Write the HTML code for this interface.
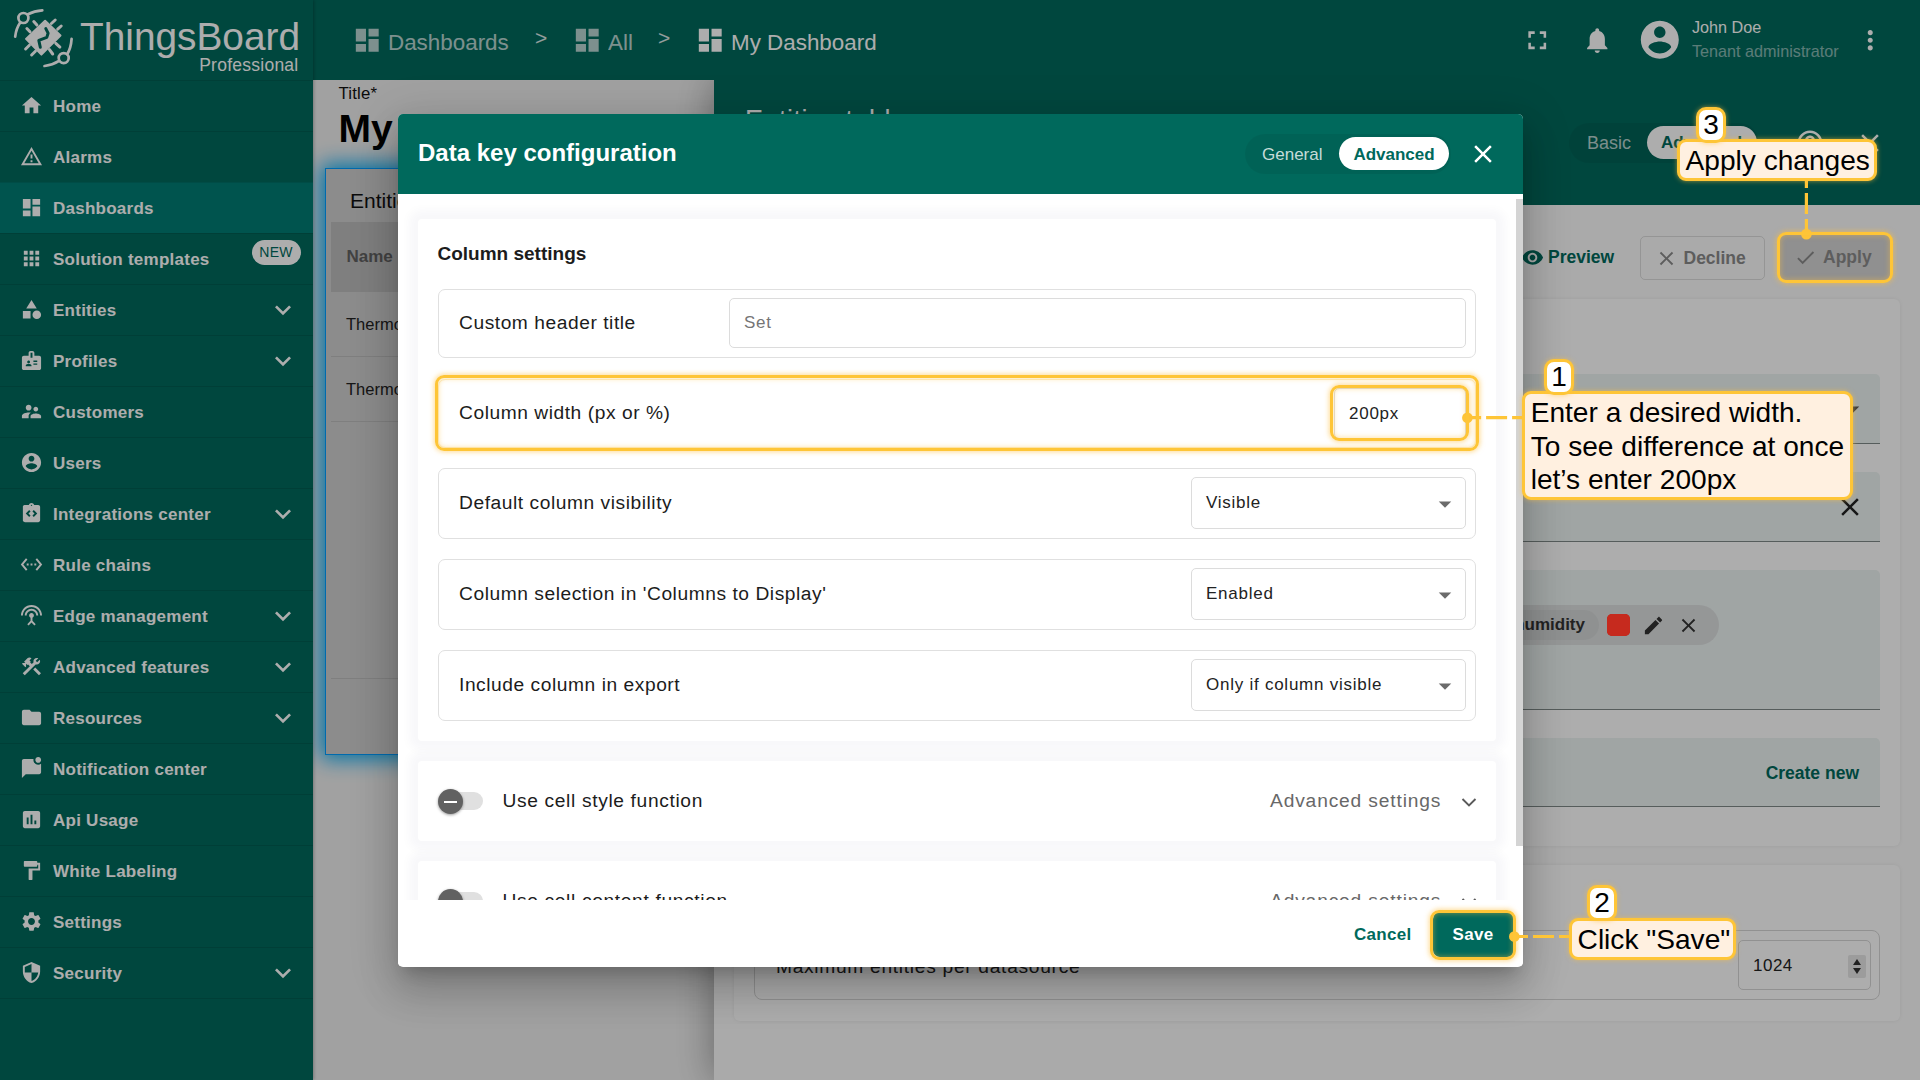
<!DOCTYPE html>
<html lang="en">
<head>
<meta charset="utf-8">
<title>ThingsBoard - Data key configuration</title>
<style>
*{box-sizing:border-box;margin:0;padding:0}
html,body{width:1920px;height:1080px;overflow:hidden;background:#eee;font-family:"Liberation Sans",sans-serif;color:#212121}
svg{display:block}
#app{position:absolute;left:0;top:0;width:1920px;height:1080px;overflow:hidden}
/* ---------- sidebar ---------- */
#side{position:absolute;left:0;top:0;width:313px;height:1080px;background:#00695c;color:#fff;z-index:5;box-shadow:1px 0 3px rgba(0,0,0,.25)}
#logo{position:absolute;left:0;top:0;width:313px;height:80px}
#logo svg{position:absolute;left:0;top:0;width:80px;height:80px}
#logo .tb{position:absolute;left:80px;top:15px;font-size:38.800px;line-height:44px;white-space:nowrap}
#logo .pro{position:absolute;right:14.500px;top:55px;font-size:17.5px;line-height:20px;letter-spacing:.25px;white-space:nowrap}
.mi{position:absolute;left:0;width:313px;height:51px;border-top:1px solid rgba(0,0,0,.10);font-weight:700;font-size:17px;letter-spacing:.25px;line-height:52px;padding-left:53px;white-space:nowrap}
.mi svg.ic{position:absolute;left:20px;top:13px;width:23px;height:23px;fill:#fff}
.mi svg.ch{position:absolute;left:267px;top:9px;width:32px;height:32px;fill:#fff}
.mi.act{background:#007d73}
.new{position:absolute;left:251.500px;top:6px;width:49px;height:24.500px;border-radius:13px;background:#fff;color:#00695c;font-size:14px;line-height:25px;font-weight:400;text-align:center;letter-spacing:.3px}
/* ---------- toolbar ---------- */
#bar{position:absolute;left:313px;top:0;width:1607px;height:80px;background:#00695c;color:#fff;z-index:2}
#bar svg{position:absolute;fill:#fff}
#bar .bc{position:absolute;top:28.500px;font-size:22.400px;line-height:28px;white-space:nowrap}
#bar .gt{position:absolute;top:24.400px;font-size:21px;line-height:28px;opacity:.85}
#bar .un{position:absolute;left:1379px;font-size:16.2px;line-height:20px;white-space:nowrap}
#backdrop{position:absolute;left:0;top:0;width:1920px;height:1080px;background:rgba(0,0,0,.32);z-index:10}
/* ---------- dashboard ---------- */
#dash{position:absolute;left:313px;top:80px;width:420px;height:1000px;background:#eee;overflow:hidden}
#dash .tl{position:absolute;left:25.500px;top:4px;font-size:16.800px;line-height:20px;color:#111;letter-spacing:.2px}
#dash .tt{position:absolute;left:25.500px;top:24.500px;font-size:39px;font-weight:700;line-height:48px;color:#000;white-space:nowrap}
#wdg{position:absolute;left:12px;top:88px;width:430px;height:587px;background:#cecece;border:1px solid #009cff;box-shadow:0 0 20px 4px rgb(0,170,245)}
#wdg .wt{position:absolute;left:24px;top:19px;font-size:21px;line-height:26px;color:#111;white-space:nowrap}
#wdg .wh{position:absolute;left:5px;top:53px;width:430px;height:70px;background:#bcbcbc}
#wdg .wh span{position:absolute;left:15.500px;top:24.500px;font-size:17px;line-height:20px;font-weight:700;color:#626262}
#wdg .wr{position:absolute;left:5px;width:430px;height:65px;border-bottom:1px solid #bbb;padding-left:15px;font-size:16.500px;line-height:64px;color:#222;white-space:nowrap}
#wdg .wl{position:absolute;left:5px;width:430px;height:1px;background:#bbb}
/* ---------- right panel ---------- */
#pan{position:absolute;left:714px;top:80px;width:1206px;height:1000px;background:#fbfbfb;z-index:1;box-shadow:0 0 36px 0 rgba(0,0,0,.38)}
#pan svg{position:absolute}
#pan .ph{position:absolute;left:0;top:0;width:1206px;height:125px;background:#00695c;color:#fff}
#pan .pt{position:absolute;left:31px;top:25px;font-size:27px;line-height:30px;white-space:nowrap;letter-spacing:.5px}
#pan .tg{position:absolute;left:855px;top:43px;width:190px;height:40px;border-radius:20px;background:rgba(0,0,0,.06)}
#pan .tg .b{position:absolute;left:18px;top:10px;font-size:18px;line-height:20px;color:rgba(255,255,255,.72)}
#pan .tg .a{position:absolute;left:77.500px;top:3px;width:110px;height:33px;border-radius:17px;background:#fff;color:#00695c;font-weight:700;font-size:17px;line-height:33px;text-align:center}
#pan .pv span{position:absolute;left:834px;top:166px;font-size:17.500px;font-weight:700;line-height:22px;color:#00695c}
#pan .bd{position:absolute;left:925.500px;top:155.500px;width:125px;height:44px;border:1px solid rgba(0,0,0,.12);border-radius:5px;color:#8a8a8a;font-size:17.500px;font-weight:700;line-height:42px;padding-left:43px}
#pan .ba{position:absolute;left:1066px;top:155px;width:110px;height:45px;border-radius:5px;background:#d5d5d5;color:#8a8a8a;font-size:17.500px;font-weight:700;line-height:45px;padding-left:43px}
#pan .card{position:absolute;left:20px;width:1166px;background:#fff;border-radius:6px;box-shadow:0 0 4px rgba(0,0,0,.07)}
#pan .fld{position:absolute;left:20px;width:1126px;background:#ecf3f2;border-bottom:1px solid #7f8a88;border-radius:5px 5px 0 0}
#pan .chip{position:absolute;left:680px;top:35px;width:285px;height:40px;border-radius:20px;background:#dcdfdf}
#pan .chip .cl{position:absolute;left:0;top:5px;width:165px;height:30px;border-radius:15px;background:#d3d6d6;font-size:17px;font-weight:700;line-height:30px;color:#333;text-align:right;padding-right:14px}
#pan .chip .sq{position:absolute;left:173px;top:9px;width:23px;height:22px;border-radius:5px;background:#ff3a2c}
#pan .cn{position:absolute;right:21px;top:24px;font-size:17.500px;font-weight:700;line-height:22px;color:#00695c}
#pan .orow{position:absolute;left:20px;top:65px;width:1126px;height:69.500px;border:1px solid #d6d6d6;border-radius:8px}
#pan .ol{position:absolute;left:21px;top:23.500px;font-size:19.200px;line-height:24px;color:#222;white-space:nowrap;letter-spacing:.7px}
#pan .num{position:absolute;left:983px;top:9px;width:133px;height:50px;border:1px solid #d6d6d6;border-radius:5px}
#pan .num span{position:absolute;left:14px;top:14px;font-size:17px;line-height:22px;color:#222;letter-spacing:.5px}
#pan .num i{position:absolute;left:109px;top:14px;width:18px;height:23px;background:#e6e6e6;border-radius:2px}
#pan .num b{position:absolute;left:5px;width:0;height:0;border-left:4px solid transparent;border-right:4px solid transparent}
#pan .num b.u{top:4px;border-bottom:6px solid #333}
#pan .num b.d{top:13px;border-top:6px solid #333}
/* ---------- dialog ---------- */
#dlg{position:absolute;left:398px;top:114px;width:1125px;height:852.700px;background:#fff;border-radius:5px;z-index:20;overflow:hidden;box-shadow:0 11px 15px -7px rgba(0,0,0,.2),0 24px 38px 3px rgba(0,0,0,.14),0 9px 46px 8px rgba(0,0,0,.12)}
#dlg .dh{position:absolute;left:0;top:0;width:1125px;height:80px;background:#00695c;color:#fff}
#dlg .dt{position:absolute;left:20px;top:24px;font-size:24px;font-weight:700;line-height:30px;white-space:nowrap}
#dlg .tg{position:absolute;left:847px;top:20px;width:206px;height:40px;border-radius:20px;background:rgba(0,0,0,.06)}
#dlg .tg .b{position:absolute;left:17px;top:11px;font-size:17px;line-height:20px;color:rgba(255,255,255,.78)}
#dlg .tg .a{position:absolute;left:94px;top:3px;width:110px;height:33px;border-radius:17px;background:#fff;color:#00695c;font-weight:700;font-size:17px;line-height:35px;text-align:center}
#dlg .dx{position:absolute;left:1069.500px;top:25px;width:30px;height:30px;fill:#fff}
#dlg .dc{position:absolute;left:0;top:80px;width:1125px;height:706px;background:#fff;overflow:hidden}
#dlg .c1{position:absolute;left:20px;top:25px;width:1078px;height:522px;background:#fff;border-radius:4px;box-shadow:0 0 10px 9px rgba(20,40,90,.03)}
#dlg .ct{position:absolute;left:19.500px;top:23px;font-size:19px;font-weight:700;line-height:24px;color:#1c1c1c;white-space:nowrap}
#dlg .row{position:absolute;left:20px;width:1038px;border:1px solid #e0e0e0;border-radius:7px}
#dlg .rl{position:absolute;left:20px;top:50%;margin-top:-12px;font-size:19.200px;line-height:24px;color:#1c1c1c;white-space:nowrap;letter-spacing:.55px}
#dlg .inp{position:absolute;border:1px solid #dcdcdc;border-radius:5px}
#dlg .inp span{position:absolute;left:14px;top:50%;margin-top:-11px;font-size:17px;line-height:22px;color:#222;letter-spacing:.75px;white-space:nowrap}
#dlg .inp svg{position:absolute;right:5px;top:11px;width:30px;height:30px;fill:#6b6b6b}
#dlg .c2{position:absolute;left:20px;width:1078px;height:80px;background:#fff;border-radius:4px;box-shadow:0 0 10px 9px rgba(20,40,90,.03)}
#dlg .sw{position:absolute;left:20px;top:28px;width:46px;height:24px}
#dlg .sw i{position:absolute;left:1px;top:3px;width:44px;height:18px;border-radius:9px;background:#e0e0e0}
#dlg .sw b{position:absolute;left:0;top:0;width:25px;height:25px;border-radius:50%;background:#616161;box-shadow:0 1px 3px rgba(0,0,0,.4)}
#dlg .sw b:after{content:"";position:absolute;left:6px;top:11.500px;width:13px;height:2px;background:#fff}
#dlg .sl{position:absolute;left:84.500px;top:28px;font-size:19.200px;line-height:24px;color:#1c1c1c;white-space:nowrap;letter-spacing:.65px}
#dlg .as{position:absolute;left:852px;top:28px;font-size:19.200px;line-height:24px;color:#686868;white-space:nowrap;letter-spacing:.85px}
#dlg .c2 svg{position:absolute;left:1041.500px;top:35px;width:18px;height:14px;fill:none;stroke:#5a5a5a;stroke-width:1.900}
#dlg .sb{position:absolute;left:1117.500px;top:0;width:7.500px;height:706px;background:#fff}
#dlg .sb i{position:absolute;left:0;top:5px;width:7.500px;height:647px;background:#d4d4d4}
#dlg .df{position:absolute;left:0;top:786px;width:1125px;height:66px;background:#fff}
#dlg .cancel{position:absolute;left:956px;top:23.500px;font-size:17px;font-weight:700;line-height:22px;color:#00695c;letter-spacing:.3px}
#dlg .save{position:absolute;left:1034.500px;top:12px;width:81px;height:45px;border-radius:7px;background:#00695c;color:#fff;font-size:17px;font-weight:700;line-height:45.500px;text-align:center;letter-spacing:.3px}
/* ---------- annotations ---------- */
#ann{position:absolute;left:0;top:0;width:1920px;height:1080px;z-index:30;font-family:"Liberation Sans",sans-serif;color:#000}
#ann .ln{position:absolute;left:0;top:0}
#ann .hl{position:absolute;border:3.500px solid #fec537;border-radius:9px;box-shadow:0 0 5px 1px rgba(253,190,60,.55),inset 0 0 5px 1px rgba(253,190,60,.4)}
#ann .lb{position:absolute;border:3px solid #fec537;border-radius:9px;background:#fff0e0;box-shadow:0 0 5px rgba(253,190,60,.6);font-size:28.100px;line-height:33.500px;padding:2.300px 0 0 5.500px;white-space:nowrap}
#ann .nb{position:absolute;width:30px;height:35.800px;border:3px solid #fec537;border-radius:10px;background:#fff;box-shadow:0 0 5px rgba(253,190,60,.6);font-size:28px;line-height:30.500px;text-align:center}

</style>
</head>
<body>
<div id="app">
<div id="bar">
<svg style="left:39px;top:25px;width:30.5px;height:30.5px;opacity:.72" viewBox="0 0 24 24"><path d="M3 13h8V3H3v10zm0 8h8v-6H3v6zm10 0h8V11h-8v10zm0-18v6h8V3h-8z"/></svg><div class="bc" style="left:75px;opacity:.72">Dashboards</div><div class="gt" style="left:222px">&gt;</div>
<svg style="left:258.5px;top:25px;width:30.5px;height:30.5px;opacity:.72" viewBox="0 0 24 24"><path d="M3 13h8V3H3v10zm0 8h8v-6H3v6zm10 0h8V11h-8v10zm0-18v6h8V3h-8z"/></svg><div class="bc" style="left:295px;opacity:.72">All</div><div class="gt" style="left:345px">&gt;</div>
<svg style="left:382px;top:25px;width:30.5px;height:30.5px" viewBox="0 0 24 24"><path d="M3 13h8V3H3v10zm0 8h8v-6H3v6zm10 0h8V11h-8v10zm0-18v6h8V3h-8z"/></svg><div class="bc" style="left:418px">My Dashboard</div>
<svg style="left:1209px;top:24.7px;width:30.5px;height:30.5px" viewBox="0 0 24 24"><path d="M7 14H5v5h5v-2H7v-3zm-2-4h2V7h3V5H5v5zm12 7h-3v2h5v-5h-2v3zM14 5v2h3v3h2V5h-5z"/></svg><svg style="left:1269px;top:25px;width:30.5px;height:30.5px" viewBox="0 0 24 24"><path d="M12 22c1.100 0 2-.9 2-2h-4c0 1.100.89 2 2 2zm6-6v-5c0-3.070-1.640-5.640-4.500-6.320V4c0-.83-.67-1.500-1.500-1.500s-1.500.67-1.500 1.500v.68C7.630 5.360 6 7.920 6 11v5l-2 2v1h16v-1l-2-2z"/></svg><svg style="left:1324px;top:17.4px;width:45.6px;height:45.6px" viewBox="0 0 24 24"><path d="M12 2C6.48 2 2 6.48 2 12s4.48 10 10 10 10-4.48 10-10S17.52 2 12 2zm0 3c1.660 0 3 1.340 3 3s-1.340 3-3 3-3-1.340-3-3 1.340-3 3-3zm0 14.200c-2.500 0-4.710-1.280-6-3.220.03-1.990 4-3.080 6-3.080 1.990 0 5.970 1.090 6 3.080-1.290 1.940-3.500 3.220-6 3.220z"/></svg><div class="un" style="top:17px">John Doe</div><div class="un" style="top:41.300px;opacity:.52">Tenant administrator</div>
<svg style="left:1541.5px;top:25px;width:30.5px;height:30.5px" viewBox="0 0 24 24"><path d="M12 8c1.100 0 2-.9 2-2s-.9-2-2-2-2 .9-2 2 .9 2 2 2zm0 2c-1.100 0-2 .9-2 2s.9 2 2 2 2-.9 2-2-.9-2-2-2zm0 6c-1.100 0-2 .9-2 2s.9 2 2 2 2-.9 2-2-.9-2-2-2z"/></svg></div>
<div id="side">
<div id="logo"><svg viewBox="0 0 80 80" fill="none" stroke="#fff" stroke-width="2.700" stroke-linecap="round" stroke-linejoin="round"><circle cx="23.400" cy="18" r="5"/><path d="M28 14.200C32.500 11.800 37 10.700 42.300 10.300M20.400 22.300C17.500 26.500 15.800 31 15.200 36.700"/><circle cx="63.700" cy="58.100" r="5"/><path d="M67.200 54.200C69.800 50 71.200 45 71.600 38.900M59 60.800C54.800 63.500 50 65.200 44.500 66"/><path stroke-width="3" d="M36.900 25.100L33.800 21.600M30 31.700L26.900 28.500M51.400 23.500L55.200 20M57.700 29.200L61.200 26M55.800 43.300L59.900 47.100M49.500 49.600L52.700 54M29.400 45.200L25.600 49M35.400 51.200L31.600 55"/><path d="M45.100 20.700L60.500 35.500 41.400 54.600 26 38.900z" fill="#fff" stroke-width="2"/><path d="M45.800 28.600l2.300 4.600-1.300 4.200-8 3 1.500 6.800" stroke="#00695c" stroke-width="3"/></svg>
<div class="tb">ThingsBoard</div><div class="pro">Professional</div></div>
<div class="mi" style="top:80px"><svg class="ic" viewBox="0 0 24 24"><path d="M10 20v-6h4v6h5v-8h3L12 3 2 12h3v8z"/></svg>Home</div>
<div class="mi" style="top:131px"><svg class="ic" viewBox="0 0 24 24"><path d="M12 5.99L19.53 19H4.47L12 5.99M12 2L1 21h22L12 2zm1 14h-2v2h2v-2zm0-6h-2v4h2v-4z"/></svg>Alarms</div>
<div class="mi act" style="top:182px"><svg class="ic" viewBox="0 0 24 24"><path d="M3 13h8V3H3v10zm0 8h8v-6H3v6zm10 0h8V11h-8v10zm0-18v6h8V3h-8z"/></svg>Dashboards</div>
<div class="mi" style="top:233px"><svg class="ic" viewBox="0 0 24 24"><path d="M4 8h4V4H4v4zm6 12h4v-4h-4v4zm-6 0h4v-4H4v4zm0-6h4v-4H4v4zm6 0h4v-4h-4v4zm6-10v4h4V4h-4zm-6 4h4V4h-4v4zm6 6h4v-4h-4v4zm0 6h4v-4h-4v4z"/></svg>Solution templates<span class="new">NEW</span></div>
<div class="mi" style="top:284px"><svg class="ic" viewBox="0 0 24 24"><path d="M12 2l-5.5 9h11zM17.5 13a4.5 4.5 0 1 0 0 9 4.5 4.5 0 0 0 0-9zM3 21.5h8v-8H3v8z"/></svg>Entities<svg class="ch" viewBox="0 0 24 24"><path d="M16.59 8.59L12 13.170 7.410 8.590 6 10l6 6 6-6z"/></svg></div>
<div class="mi" style="top:335px"><svg class="ic" viewBox="0 0 24 24"><path d="M20 7h-5V4c0-1.1-.9-2-2-2h-2c-1.1 0-2 .9-2 2v3H4c-1.1 0-2 .9-2 2v11c0 1.1.9 2 2 2h16c1.1 0 2-.9 2-2V9c0-1.1-.9-2-2-2zM9 12c.83 0 1.5.67 1.5 1.5S9.83 15 9 15s-1.5-.67-1.5-1.5S8.17 12 9 12zm3 6H6v-.75c0-1 2-1.5 3-1.5s3 .5 3 1.500V18zm1-9h-2V4h2v5zm5 7.5h-4V15h4v1.5zm0-3h-4V12h4v1.5z"/></svg>Profiles<svg class="ch" viewBox="0 0 24 24"><path d="M16.59 8.59L12 13.170 7.410 8.590 6 10l6 6 6-6z"/></svg></div>
<div class="mi" style="top:386px"><svg class="ic" viewBox="0 0 24 24"><path d="M16.5 12c1.38 0 2.49-1.12 2.49-2.5S17.88 7 16.5 7C15.12 7 14 8.12 14 9.5s1.12 2.5 2.5 2.5zM9 11c1.66 0 2.99-1.34 2.99-3S10.660 5 9 5C7.34 5 6 6.34 6 8s1.34 3 3 3zm7.5 3c-1.83 0-5.5.92-5.5 2.750V19h11v-2.250c0-1.830-3.670-2.750-5.500-2.750zM9 13c-2.330 0-7 1.170-7 3.500V19h7v-2.250c0-.85.33-2.340 2.370-3.470C10.500 13.100 9.660 13 9 13z"/></svg>Customers</div>
<div class="mi" style="top:437px"><svg class="ic" viewBox="0 0 24 24"><path d="M12 2C6.48 2 2 6.48 2 12s4.48 10 10 10 10-4.48 10-10S17.52 2 12 2zm0 3c1.660 0 3 1.340 3 3s-1.340 3-3 3-3-1.340-3-3 1.340-3 3-3zm0 14.200c-2.500 0-4.710-1.280-6-3.220.03-1.990 4-3.080 6-3.080 1.990 0 5.970 1.090 6 3.080-1.290 1.940-3.500 3.220-6 3.220z"/></svg>Users</div>
<div class="mi" style="top:488px"><svg class="ic" viewBox="0 0 24 24"><path d="M19 3h-4.180C14.4 1.840 13.300 1 12 1c-1.300 0-2.400.84-2.820 2H5c-.14 0-.27.01-.4.04-.39.08-.74.28-1.010.55-.18.18-.33.4-.43.64-.1.230-.16.490-.16.770v14c0 .27.06.54.16.78s.25.450.43.640c.27.270.62.470 1.010.550.13.02.26.030.4.030h14c1.100 0 2-.9 2-2V5c0-1.100-.9-2-2-2zM11 14.170l-1.410 1.420L6 12l3.590-3.590L11 9.830 8.830 12 11 14.170zm1-9.920c-.41 0-.75-.34-.75-.75s.34-.75.750-.75.750.34.750.750-.34.750-.750.750zm2.410 11.340L13 14.170 15.170 12 13 9.830l1.410-1.420L18 12l-3.590 3.590z"/></svg>Integrations center<svg class="ch" viewBox="0 0 24 24"><path d="M16.59 8.59L12 13.170 7.410 8.590 6 10l6 6 6-6z"/></svg></div>
<div class="mi" style="top:539px"><svg class="ic" viewBox="0 0 24 24"><path d="M7.77 6.76L6.23 5.48.82 12l5.410 6.520 1.540-1.280L3.420 12l4.350-5.240zM7 13h2v-2H7v2zm10-2h-2v2h2v-2zm-6 2h2v-2h-2v2zm6.770-7.520l-1.540 1.280L20.580 12l-4.350 5.240 1.540 1.280L23.180 12l-5.410-6.520z"/></svg>Rule chains</div>
<div class="mi" style="top:590px"><svg class="ic" viewBox="0 0 24 24"><path d="M12 5c-3.870 0-7 3.130-7 7h2c0-2.760 2.240-5 5-5s5 2.240 5 5h2c0-3.870-3.130-7-7-7zm1 9.290c.88-.39 1.500-1.260 1.500-2.290 0-1.380-1.120-2.500-2.500-2.500S9.500 10.620 9.500 12c0 1.020.62 1.900 1.500 2.290v3.300L7.590 21 9 22.410l3-3 3 3L16.410 21 13 17.590v-3.300zM12 1C5.930 1 1 5.930 1 12h2c0-4.970 4.030-9 9-9s9 4.030 9 9h2c0-6.070-4.930-11-11-11z"/></svg>Edge management<svg class="ch" viewBox="0 0 24 24"><path d="M16.59 8.59L12 13.170 7.410 8.590 6 10l6 6 6-6z"/></svg></div>
<div class="mi" style="top:641px"><svg class="ic" viewBox="0 0 24 24"><path d="M13.783 15.172l2.121-2.121 5.996 5.996-2.121 2.121zM17.5 10c1.930 0 3.500-1.570 3.500-3.500 0-.58-.16-1.120-.41-1.600l-2.700 2.700-1.490-1.490 2.700-2.700c-.48-.25-1.020-.41-1.600-.41C15.570 3 14 4.570 14 6.500c0 .41.080.8.210 1.160l-1.850 1.850-1.780-1.780.71-.71-1.410-1.410L12 3.490c-1.170-1.170-3.070-1.170-4.240 0L4.220 7.030l1.410 1.410H2.810l-.71.71 3.540 3.540.71-.71V9.150l1.410 1.410.71-.71 1.780 1.780-7.410 7.410 2.120 2.120L16.340 9.790c.36.130.75.210 1.160.21z"/></svg>Advanced features<svg class="ch" viewBox="0 0 24 24"><path d="M16.59 8.59L12 13.170 7.410 8.590 6 10l6 6 6-6z"/></svg></div>
<div class="mi" style="top:692px"><svg class="ic" viewBox="0 0 24 24"><path d="M10 4H4c-1.100 0-1.990.9-1.990 2L2 18c0 1.100.9 2 2 2h16c1.100 0 2-.9 2-2V8c0-1.100-.9-2-2-2h-8l-2-2z"/></svg>Resources<svg class="ch" viewBox="0 0 24 24"><path d="M16.59 8.59L12 13.170 7.410 8.590 6 10l6 6 6-6z"/></svg></div>
<div class="mi" style="top:743px"><svg class="ic" viewBox="0 0 24 24"><path d="M22 6.980V16c0 1.100-.9 2-2 2H6l-4 4V4c0-1.100.9-2 2-2h10.100c-.06.320-.1.660-.1 1 0 2.760 2.240 5 5 5 1.130 0 2.160-.39 3-1.020zM16 3c0 1.660 1.340 3 3 3s3-1.340 3-3-1.340-3-3-3-3 1.340-3 3z"/></svg>Notification center</div>
<div class="mi" style="top:794px"><svg class="ic" viewBox="0 0 24 24"><path d="M19 3H5c-1.100 0-2 .9-2 2v14c0 1.100.9 2 2 2h14c1.100 0 2-.9 2-2V5c0-1.100-.9-2-2-2zM9 17H7v-7h2v7zm4 0h-2V7h2v10zm4 0h-2v-4h2v4z"/></svg>Api Usage</div>
<div class="mi" style="top:845px"><svg class="ic" viewBox="0 0 24 24"><path d="M18 4V3c0-.55-.45-1-1-1H5c-.55 0-1 .45-1 1v4c0 .55.45 1 1 1h12c.55 0 1-.45 1-1V6h1v4H9v11c0 .55.45 1 1 1h2c.55 0 1-.45 1-1v-9h8V4h-3z"/></svg>White Labeling</div>
<div class="mi" style="top:896px"><svg class="ic" viewBox="0 0 24 24"><path d="M19.14 12.94c.04-.3.06-.61.06-.94 0-.32-.02-.64-.07-.94l2.030-1.580c.18-.14.230-.41.120-.61l-1.920-3.320c-.12-.22-.37-.29-.59-.22l-2.390.96c-.5-.38-1.030-.7-1.620-.94l-.36-2.540c-.04-.24-.24-.41-.48-.41h-3.840c-.24 0-.43.17-.47.41l-.36 2.540c-.59.240-1.130.570-1.620.94l-2.390-.96c-.22-.08-.47 0-.59.220L2.740 8.870c-.12.210-.08.470.12.610l2.030 1.580c-.05.300-.09.630-.09.940s.02.640.07.940l-2.030 1.580c-.18.140-.23.410-.12.610l1.920 3.320c.12.220.37.290.59.220l2.390-.96c.5.380 1.030.7 1.620.94l.36 2.540c.05.240.24.410.48.410h3.840c.24 0 .44-.17.470-.41l.36-2.540c.59-.24 1.130-.56 1.620-.94l2.390.96c.22.080.47 0 .59-.22l1.920-3.320c.12-.22.070-.47-.12-.61l-2.010-1.580zM12 15.600c-1.980 0-3.600-1.620-3.600-3.600s1.620-3.600 3.600-3.600 3.600 1.620 3.600 3.600-1.620 3.600-3.600 3.600z"/></svg>Settings</div>
<div class="mi" style="top:947px"><svg class="ic" viewBox="0 0 24 24"><path d="M12 1L3 5v6c0 5.550 3.840 10.740 9 12 5.160-1.260 9-6.450 9-12V5l-9-4zm0 10.990h7c-.53 4.120-3.280 7.790-7 8.940V12H5V6.300l7-3.110v8.800z"/></svg>Security<svg class="ch" viewBox="0 0 24 24"><path d="M16.59 8.59L12 13.170 7.410 8.590 6 10l6 6 6-6z"/></svg></div>
<div class="mi" style="top:998px;height:1px"></div>
</div>
<!-- dashboard area -->
<div id="dash">
  <div class="tl">Title*</div>
  <div class="tt">My Dashboard</div>
  <div id="wdg">
    <div class="wt">Entities table</div>
    <div class="wh"><span>Name</span></div>
    <div class="wr" style="top:123px">Thermostat T1</div>
    <div class="wr" style="top:188px">Thermostat T2</div>
    <div class="wl" style="top:509px"></div>
  </div>
</div>
<!-- widget edit panel -->
<div id="pan">
  <div class="ph">
    <div class="pt">Entities table</div>
    <div class="tg"><span class="b">Basic</span><span class="a">Advanced</span></div>
    <svg style="left:1081px;top:48px;width:30px;height:30px;fill:#fff" viewBox="0 0 24 24"><path d="M11 18h2v-2h-2v2zm1-16C6.480 2 2 6.480 2 12s4.480 10 10 10 10-4.480 10-10S17.520 2 12 2zm0 18c-4.410 0-8-3.590-8-8s3.590-8 8-8 8 3.590 8 8-3.590 8-8 8zm0-14c-2.210 0-4 1.790-4 4h2c0-1.100.9-2 2-2s2 .9 2 2c0 2-3 1.750-3 5h2c0-2.250 3-2.500 3-5 0-2.210-1.790-4-4-4z"/></svg>
    <svg style="left:1141px;top:48px;width:30px;height:30px;fill:#fff" viewBox="0 0 24 24"><path d="M19 6.410L17.590 5 12 10.590 6.410 5 5 6.410 10.590 12 5 17.590 6.410 19 12 13.410 17.590 19 19 17.590 13.410 12z"/></svg>
  </div>
  <div class="pv"><svg style="left:807px;top:166px;width:23px;height:23px;fill:#00695c" viewBox="0 0 24 24"><path d="M12 4.500C7 4.500 2.730 7.610 1 12c1.730 4.390 6 7.500 11 7.500s9.270-3.110 11-7.500c-1.730-4.390-6-7.500-11-7.500zM12 17c-2.760 0-5-2.240-5-5s2.240-5 5-5 5 2.240 5 5-2.240 5-5 5zm0-8c-1.660 0-3 1.340-3 3s1.340 3 3 3 3-1.340 3-3-1.340-3-3-3z"/></svg><span>Preview</span></div>
  <div class="bd"><svg style="left:14px;top:10px;width:23px;height:23px;fill:#8a8a8a" viewBox="0 0 24 24"><path d="M19 6.410L17.590 5 12 10.590 6.410 5 5 6.410 10.590 12 5 17.590 6.410 19 12 13.410 17.590 19 19 17.590 13.410 12z"/></svg>Decline</div>
  <div class="ba"><svg style="left:14px;top:11px;width:23px;height:23px;fill:#8a8a8a" viewBox="0 0 24 24"><path d="M9 16.170L4.830 12l-1.420 1.410L9 19 21 7l-1.410-1.410z"/></svg>Apply</div>
  <div class="card" style="top:219px;height:547px">
    <div class="fld" style="top:75px;height:69.600px"><svg style="left:1084px;top:20px;width:30px;height:30px;fill:#555" viewBox="0 0 24 24"><path d="M7 10l5 5 5-5z"/></svg></div>
    <div class="fld" style="top:173px;height:69.600px"><svg style="left:1081px;top:20px;width:30px;height:30px;fill:#222" viewBox="0 0 24 24"><path d="M19 6.410L17.590 5 12 10.590 6.410 5 5 6.410 10.590 12 5 17.590 6.410 19 12 13.410 17.590 19 19 17.590 13.410 12z"/></svg></div>
    <div class="fld" style="top:271px;height:139.600px">
      <div class="chip"><span class="cl">humidity</span><span class="sq"></span><svg style="left:208px;top:8.500px;width:23px;height:23px;fill:#333" viewBox="0 0 24 24"><path d="M3 17.250V21h3.750L17.810 9.940l-3.750-3.750L3 17.250zM20.710 7.040c.39-.39.390-1.020 0-1.410l-2.340-2.340c-.39-.39-1.020-.39-1.410 0l-1.830 1.830 3.750 3.750 1.830-1.830z"/></svg><svg style="left:243px;top:8.500px;width:23px;height:23px;fill:#333" viewBox="0 0 24 24"><path d="M19 6.410L17.590 5 12 10.590 6.410 5 5 6.410 10.590 12 5 17.590 6.410 19 12 13.410 17.590 19 19 17.590 13.410 12z"/></svg></div>
    </div>
    <div class="fld" style="top:439px;height:69.400px"><span class="cn">Create new</span></div>
  </div>
  <div class="card" style="top:785px;height:156px">
    <div class="orow"><span class="ol">Maximum entities per datasource</span>
      <div class="num"><span>1024</span><i><b class="u"></b><b class="d"></b></i></div>
    </div>
  </div>
</div>
</div>
<div id="backdrop"></div>
<div id="dlg">
  <div class="dh">
    <div class="dt">Data key configuration</div>
    <div class="tg"><span class="b">General</span><span class="a">Advanced</span></div>
    <svg class="dx" viewBox="0 0 24 24"><path d="M19 6.410L17.590 5 12 10.590 6.410 5 5 6.410 10.590 12 5 17.590 6.410 19 12 13.410 17.590 19 19 17.590 13.410 12z"/></svg>
  </div>
  <div class="dc">
    <div class="c1">
      <div class="ct">Column settings</div>
      <div class="row" style="top:69.500px;height:69px"><span class="rl">Custom header title</span><div class="inp" style="left:290px;top:8.300px;width:737px;height:50px"><span style="color:#757575">Set</span></div></div>
      <div class="row" style="top:159.500px;height:69px;border-color:#fdeec8"><span class="rl">Column width (px or %)</span><div class="inp" style="left:895px;top:8.500px;width:132px;height:51px"><span>200px</span></div></div>
      <div class="row" style="top:249px;height:70.500px"><span class="rl">Default column visibility</span><div class="inp sel" style="left:752px;top:8px;width:275px;height:52px"><span>Visible</span><svg viewBox="0 0 24 24"><path d="M7 10l5 5 5-5z"/></svg></div></div>
      <div class="row" style="top:340px;height:70.500px"><span class="rl">Column selection in 'Columns to Display'</span><div class="inp sel" style="left:752px;top:8px;width:275px;height:52px"><span>Enabled</span><svg viewBox="0 0 24 24"><path d="M7 10l5 5 5-5z"/></svg></div></div>
      <div class="row" style="top:431px;height:70.500px"><span class="rl">Include column in export</span><div class="inp sel" style="left:752px;top:8px;width:275px;height:52px"><span>Only if column visible</span><svg viewBox="0 0 24 24"><path d="M7 10l5 5 5-5z"/></svg></div></div>
    </div>
    <div class="c2" style="top:567px">
      <div class="sw"><i></i><b></b></div><span class="sl">Use cell style function</span><span class="as">Advanced settings</span><svg viewBox="0 0 18 14"><path d="M2.500 3l6.500 6.500 6.500-6.500"/></svg>
    </div>
    <div class="c2" style="top:666.500px">
      <div class="sw"><i></i><b></b></div><span class="sl">Use cell content function</span><span class="as">Advanced settings</span><svg viewBox="0 0 18 14"><path d="M2.500 3l6.500 6.500 6.500-6.500"/></svg>
    </div>
    <div class="sb"><i></i></div>
  </div>
  <div class="df"><span class="cancel">Cancel</span><span class="save">Save</span></div>
</div>
<div style="position:absolute;left:1607px;top:614px;width:23px;height:22px;border-radius:5px;background:#c62a1e;z-index:15"></div>
<div id="ann">
  <svg class="ln" width="1920" height="1080" viewBox="0 0 1920 1080">
    <g stroke="#fec537" stroke-width="3.200" fill="none" stroke-dasharray="21 5">
      <path d="M1467.400 417.600H1524" stroke-dashoffset="7.300"/>
      <path d="M1514.300 936.500H1571" stroke-dashoffset="7.300"/>
      <path d="M1806.400 234V180" stroke-dashoffset="5.900"/>
    </g>
    <g fill="#fec537"><circle cx="1467.400" cy="417.800" r="5.300"/><circle cx="1514.300" cy="936.600" r="5.300"/><circle cx="1806.400" cy="234.100" r="5.400"/></g>
  </svg>
  <div class="hl" style="left:435px;top:375px;width:1044px;height:76px"></div>
  <div class="hl" style="left:1330px;top:385px;width:139px;height:56px"></div>
  <div class="hl" style="left:1429.700px;top:909.500px;width:86.200px;height:50px"></div>
  <div class="hl" style="left:1777px;top:231.500px;width:116px;height:51.500px"></div>
  <div class="lb" style="left:1522.200px;top:391px;width:330.800px;height:108.500px">Enter a desired width.<br>To see difference at once<br>let’s enter 200px</div>
  <div class="nb" style="left:1544px;top:359px">1</div>
  <div class="lb" style="left:1569.100px;top:918.200px;width:166.900px;height:41.400px">Click "Save"</div>
  <div class="nb" style="left:1587px;top:885.300px">2</div>
  <div class="lb" style="left:1677.100px;top:139px;width:200px;height:41.500px">Apply changes</div>
  <div class="nb" style="left:1696px;top:107px">3</div>
</div>
</body>
</html>
